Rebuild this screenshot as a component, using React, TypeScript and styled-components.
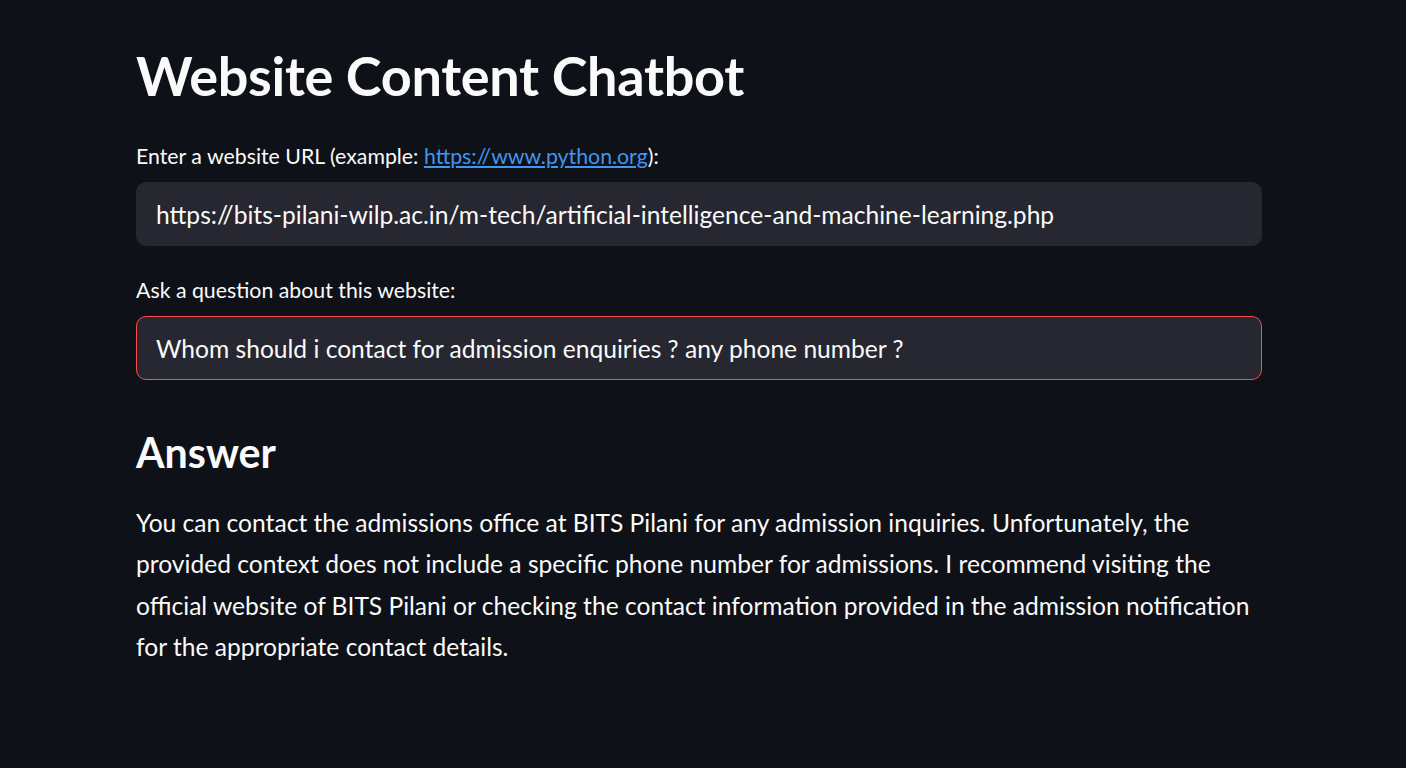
import React from "react";
import styled, { createGlobalStyle } from "styled-components";

const Global = createGlobalStyle`
  html, body { margin: 0; padding: 0; background: #0e1117; }
  body { font-family: Lato, "Noto Sans", sans-serif; color: #fafafa; }
  * { box-sizing: border-box; }
`;

const Page = styled.main`
  min-height: 768px;
  background: #0e1117;
  padding: 42px 144px 0 136px;
  display: flex;
  flex-direction: column;
`;

const Title = styled.h1`
  margin: 0;
  font-size: 54px;
  font-weight: 700;
  line-height: 67px;
  letter-spacing: -0.3px;
  color: #fafafa;
`;

const Field = styled.div<{ $top: number }>`
  display: flex;
  flex-direction: column;
  gap: 13px;
  margin-top: ${(p) => p.$top}px;
`;

const Label = styled.label`
  font-size: 21.3px;
  line-height: 25px;
  color: #fafafa;
`;

const Link = styled.a`
  color: #4096f0;
  text-decoration: underline;
  text-underline-offset: 2px;
`;

const Input = styled.div<{ $focused?: boolean }>`
  height: 64px;
  display: flex;
  align-items: center;
  padding: 0 19px;
  background: #262730;
  border: 1px solid ${(p) => (p.$focused ? "#ff4b4b" : "#262730")};
  border-radius: 10px;
  font-size: 24.6px;
  color: #fafafa;
  white-space: nowrap;
  overflow: hidden;
`;

const Heading = styled.h2`
  margin: 48px 0 0;
  font-size: 41.2px;
  font-weight: 700;
  line-height: 48px;
  color: #fafafa;
`;

const Para = styled.p`
  margin: 26px 0 0;
  font-size: 24.6px;
  line-height: 41.3px;
  color: #fafafa;
`;

export default function App() {
  return (
    <>
      <Global />
      <Page>
        <Title>Website Content Chatbot</Title>
        <Field $top={35}>
          <Label>
            Enter a website URL (example: <Link href="#">https://www.python.org</Link>):
          </Label>
          <Input>https://bits-pilani-wilp.ac.in/m-tech/artificial-intelligence-and-machine-learning.php</Input>
        </Field>
        <Field $top={32}>
          <Label>Ask a question about this website:</Label>
          <Input $focused>Whom should i contact for admission enquiries ? any phone number ?</Input>
        </Field>
        <Heading>Answer</Heading>
        <Para>
          You can contact the admissions office at BITS Pilani for any admission inquiries. Unfortunately, the
          provided context does not include a specific phone number for admissions. I recommend visiting the
          official website of BITS Pilani or checking the contact information provided in the admission notification
          for the appropriate contact details.
        </Para>
      </Page>
    </>
  );
}
